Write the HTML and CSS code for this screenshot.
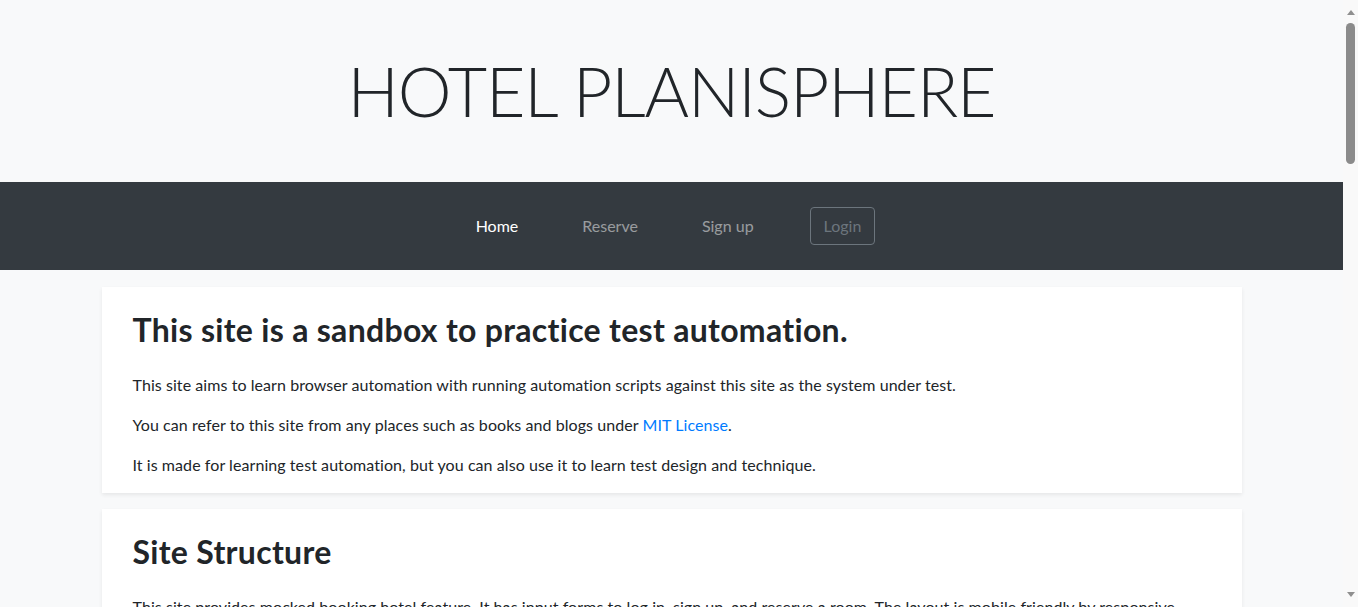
FILE: index.html
```html
<!DOCTYPE html>
<html lang="en">
<head>
<meta charset="utf-8">
<title>HOTEL PLANISPHERE - Website for Practice Test Automation</title>
<link rel="stylesheet" href="styles.css">
</head>
<body>
<header class="site-header">
  <h1 class="site-title">HOTEL PLANISPHERE</h1>
</header>
<nav class="navbar">
  <ul class="nav-list">
    <li class="nav-item"><a class="nav-link active" href="#">Home</a></li>
    <li class="nav-item"><a class="nav-link" href="#">Reserve</a></li>
    <li class="nav-item"><a class="nav-link" href="#">Sign up</a></li>
    <li class="nav-item"><a class="btn-login" href="#">Login</a></li>
  </ul>
</nav>
<main class="container">
  <section class="card">
    <h2 class="card-title">This site is a sandbox to practice test automation.</h2>
    <p>This site aims to learn browser automation with running automation scripts against this site as the system under test.</p>
    <p>You can refer to this site from any places such as books and blogs under <a class="link" href="#">MIT License</a>.</p>
    <p>It is made for learning test automation, but you can also use it to learn test design and technique.</p>
  </section>
  <section class="card">
    <h2 class="card-title">Site Structure</h2>
    <p>This site provides mocked booking hotel feature. It has input forms to log in, sign up, and reserve a room. The layout is mobile friendly by responsive design.</p>
    <p>It's a static site, so no data is sent to the server. The data you input is saved in browser's Cookie, localStorage, and sessionStorage.</p>
    <p>The site is available in Japanese and English.</p>
  </section>
  <section class="card">
    <h2 class="card-title">Pages</h2>
    <p>Home: The top page. You can select a language here.</p>
    <p>Reserve: Plans are listed. You can select a plan and reserve a room.</p>
    <p>Sign up: You can register as a member. Members can see special plans.</p>
    <p>Login: You can log in with a registered account or preset accounts.</p>
    <p>My Page: You can see your member information and change your icon.</p>
  </section>
  <section class="card">
    <h2 class="card-title">Preset Accounts</h2>
    <p>Email: clark@example.com / Password: password / Membership: Premium</p>
    <p>Email: diana@example.com / Password: pass1234 / Membership: Normal</p>
    <p>Email: ororo@example.com / Password: pa55w0rd! / Membership: Premium</p>
    <p>Email: miles@example.com / Password: pass-pass / Membership: Normal</p>
  </section>
  <section class="card">
    <h2 class="card-title">Tips</h2>
    <p>Some pages have intentionally tricky elements, such as dialogs, new windows, and elements that appear after a delay.</p>
    <p>Try writing test scripts that handle these situations reliably.</p>
    <p>If you find any issues, please report them on the repository.</p>
  </section>
</main>
<footer class="site-footer">
  <p>&copy; HOTEL PLANISPHERE. All rights reserved.</p>
</footer>
<div class="scrollbar" aria-hidden="true">
  <span class="sb-arrow sb-up"></span>
  <span class="sb-thumb"></span>
  <span class="sb-arrow sb-down"></span>
</div>
</body>
</html>
```
FILE: styles.css
```css
* { box-sizing: border-box; }
html { margin: 0; padding: 0; }
body {
  margin: 0 15px 0 0;
  padding: 0;
  background: #f8f9fa;
  color: #212529;
  font-family: Lato, "Open Sans", "Liberation Sans", sans-serif;
  font-size: 16px;
  line-height: 1.5;
}
.site-header {
  padding: 48px 0;
  text-align: center;
}
.site-title {
  margin: 0;
  font-size: 68px;
  font-weight: 300;
  letter-spacing: -1.1px;
  line-height: 86px;
  color: #212529;
}
.navbar {
  background: #343a40;
  height: 88px;
  display: flex;
  align-items: center;
  justify-content: center;
}
.nav-list {
  list-style: none;
  margin: 0;
  padding: 0;
  display: flex;
  align-items: center;
}
.nav-item { margin: 0 24px; }
.nav-link {
  display: block;
  padding: 8px;
  color: rgba(255,255,255,.5);
  text-decoration: none;
}
.nav-link.active { color: #fff; }
.btn-login {
  display: block;
  padding: 6px 13px;
  border: 1px solid #6c757d;
  border-radius: 4px;
  color: #6c757d;
  text-decoration: none;
}
.container {
  width: 1140px;
  margin: 0 auto;
  padding-top: 17px;
}
.card {
  background: #fff;
  box-shadow: 0 .125rem .25rem rgba(0,0,0,.075);
  padding: 24px 31px 0;
  margin-bottom: 16px;
  overflow: hidden;
}
.card-title {
  margin: 0 0 24px;
  font-size: 32px;
  font-weight: 700;
  letter-spacing: 0.3px;
  line-height: 38px;
}
.card p { margin: 0 0 16px; letter-spacing: 0.07px; }
.link { color: #007bff; text-decoration: none; }
.site-footer {
  text-align: center;
  padding: 32px 0 600px;
  color: #6c757d;
}
.site-footer p { margin: 0; }

/* faux window scrollbar */
.scrollbar {
  position: fixed;
  top: 0;
  right: 0;
  width: 15px;
  height: 100vh;
  background: #f9f9f9;
  display: flex;
  flex-direction: column;
  align-items: center;
  padding: 10px 0 10px;
}
.sb-arrow {
  width: 0;
  height: 0;
  border-left: 4.5px solid transparent;
  border-right: 4.5px solid transparent;
}
.sb-up { border-bottom: 5px solid #8f8f8f; }
.sb-down { border-top: 5px solid #8f8f8f; margin-top: auto; }
.sb-thumb {
  display: block;
  width: 9px;
  height: 141px;
  margin-top: 8px;
  background: #8b8b8b;
  border-radius: 5px;
}
```
